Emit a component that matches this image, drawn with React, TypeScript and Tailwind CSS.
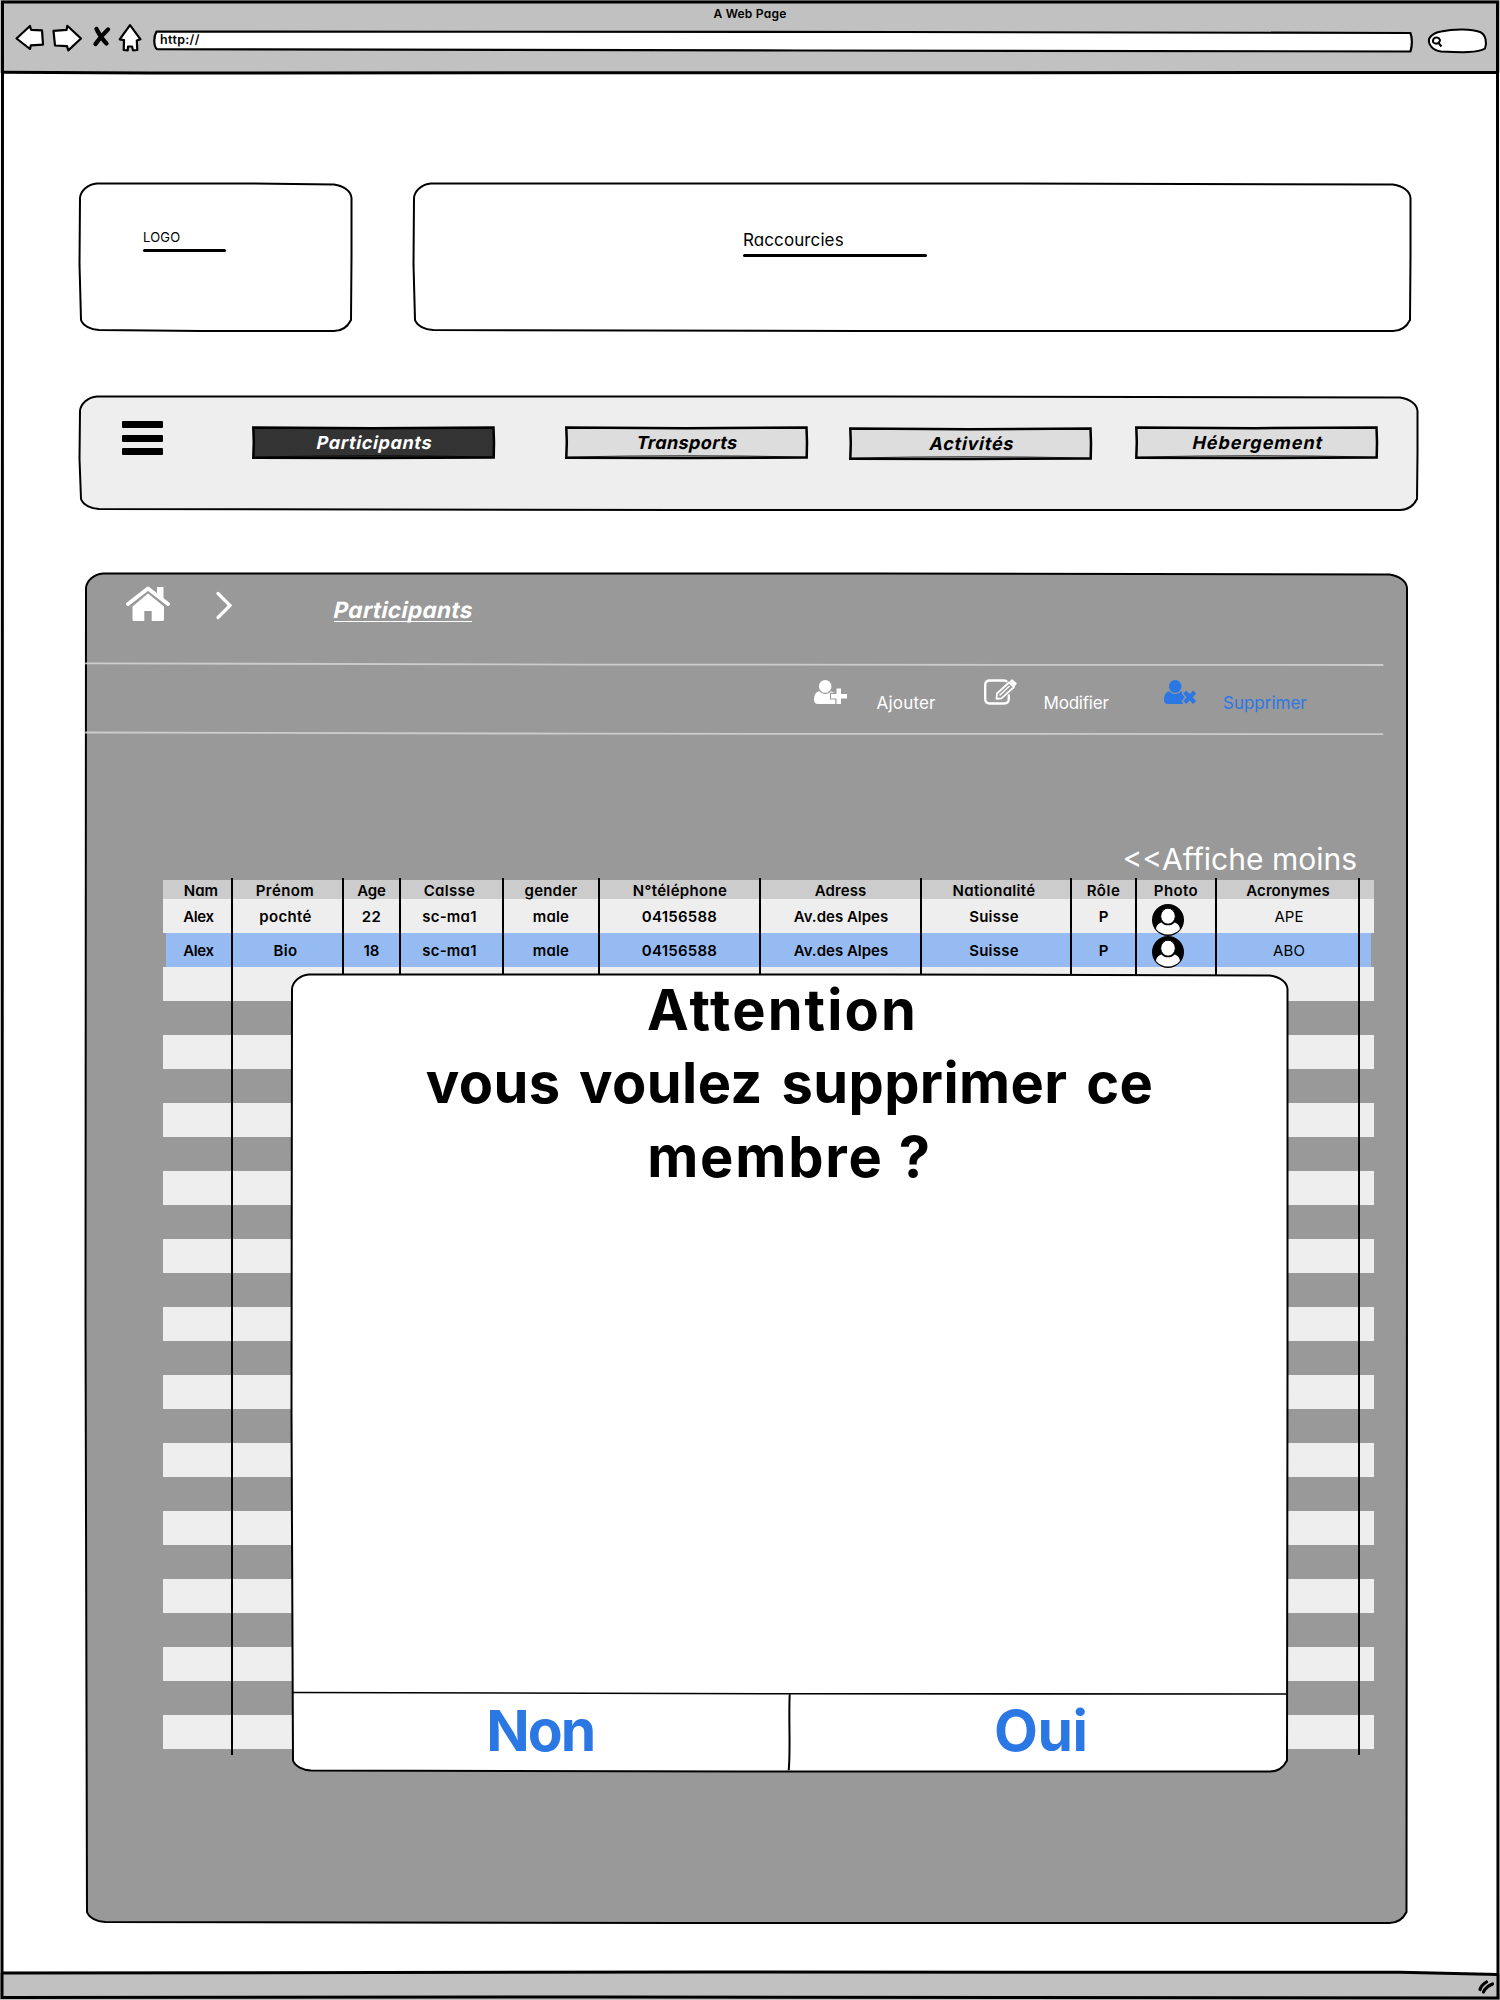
import type { ReactNode } from "react";

type FrameProps = { w: number; h: number; fill?: string; strokeWidth?: number };

/* Rounded outline with a slightly wavering, hand-drawn line. */
function SketchFrame({ w, h, fill = "#fff", strokeWidth = 2 }: FrameProps) {
  const d = [
    `M18 0.500 L${w * 0.6} 0.400 L${w - 18} 1.500`,
    `C${w - 8} 3 ${w - 1} 8 ${w - 0.5} 15`,
    `L${w - 0.5} ${h * 0.5} L${w - 1} ${h - 11}`,
    `C${w - 4} ${h - 5} ${w - 10} ${h} ${w - 18} ${h}`,
    `L${w * 0.45} ${h} L20 ${h - 1}`,
    `C12 ${h - 1.5} 4 ${h - 5} 2 ${h - 11}`,
    `L0.5 ${h * 0.55} L1 15 C1.5 8 9 1 18 0.500 Z`,
  ].join(" ");
  return (
    <svg className="absolute inset-0 h-full w-full overflow-visible" viewBox={`0 0 ${w} ${h}`} aria-hidden>
      <path d={d} fill={fill} stroke="#000" strokeWidth={strokeWidth} strokeLinejoin="round" />
    </svg>
  );
}

function BrowserBar() {
  return (
    <header className="flex h-[73px] flex-col bg-[#c1c1c1]">
      <div className="flex h-[23px] justify-center pt-[7.500px]">
        <span className="text-[12px] leading-none font-semibold tracking-[0.250px]">A Web Page</span>
      </div>
      <div className="flex items-start pl-[15px]">
        <svg className="mt-[0.500px] h-[28px] w-[130px] overflow-visible" viewBox="15 23 130 28" fill="#fff" stroke="#000" strokeWidth="2.2" strokeLinejoin="round" strokeLinecap="round" aria-hidden>
          <path d="M16.5 37.5 L30 25 L31 28.8 L42 29.3 L43 43.7 L30.8 44.4 L30 48 Z" />
          <path d="M53.5 29.8 L66.6 28.8 L67.3 24.8 L81 37.5 L68.3 49.4 L67 45.2 L55 44.5 Z" />
          <path d="M96.500 28 C99 33 102 38 106.500 42.500 M108 28.500 C103 33 99 38 95.500 43" strokeWidth="4.300" fill="none" />
          <path d="M130 24.200 L140.500 38.300 L136.800 39.500 L137.300 49 L133 49.300 L132 45.500 L128 45.500 L127.700 49.500 L123.700 49 L124 39.200 L119.700 38.300 Z" />
        </svg>
        <div className="relative mt-[8px] ml-[9px] h-[21px] w-[1259px] pt-[3px] pl-[6px]">
          <svg className="absolute inset-0 h-full w-full overflow-visible" viewBox="154 31 1259 21" aria-hidden>
            <path d="M156.500 31.500 L900 32 L1410.500 33 C1412.500 39 1412 46 1410.500 51.500 L800 50.500 L157 49.200 C153.500 46 153.500 37 156.500 31.500 Z" fill="#fff" stroke="#000" strokeWidth="2.200" strokeLinejoin="round" />
          </svg>
          <span className="relative block w-fit text-[12.500px] leading-none font-semibold tracking-[0.350px]">http://</span>
        </div>
        <svg className="mt-[2px] ml-[14px] h-[26px] w-[62px] overflow-visible" viewBox="1427 25 62 26" fill="#fff" stroke="#000" strokeWidth="2" aria-hidden>
          <path d="M1441 31.500 C1455 28.500 1472 29 1480 32 C1486 35 1487 42 1485 48.500 C1478 53 1462 52.500 1441 51.500 C1432 50 1428 44 1429 39 C1431 35 1435 32.500 1441 31.500 Z" />
          <path d="M1433.500 39 C1435 36.500 1439 37 1440 40 C1440 43 1436.500 44.500 1434 43 C1432.500 42 1432.700 40.500 1433.500 39 Z M1438.500 43 L1441.500 46.500" />
        </svg>
      </div>
    </header>
  );
}

function NavButton({ label, active, className }: { label: string; active?: boolean; className: string }) {
  return (
    <button className={"relative flex h-[33px] w-[243px] justify-center pt-[8px] pl-[2px] " + className}>
      <svg className="absolute inset-0 h-full w-full overflow-visible" viewBox="0 0 243 33" aria-hidden>
        <path d="M1.300 1.500 L120 2.200 L241.500 1.500 L242 16 L241.700 31.500 L120 32 L1.300 31.700 L1.800 16 Z" fill={active ? "#333" : "#ddd"} stroke="#000" strokeWidth="2.500" />
        <path d="M2 31 Q120 28.500 241 31" fill="none" stroke="#000" strokeWidth="0.800" />
      </svg>
      <span className={"relative -skew-x-12 text-[18px] leading-none font-bold " + (active ? "text-white" : "text-black")}>{label}</span>
    </button>
  );
}

function AddUserIcon() {
  return (
    <svg className="h-[24px] w-[33px]" viewBox="0 0 33 24" fill="currentColor" aria-hidden>
      <ellipse cx="11.200" cy="6.400" rx="6.200" ry="6.400" />
      <path d="M5.500 11.300 C7 13 9 14 11.200 14 C13.400 14 15.400 13 17 11.300 C18 11.400 19 12 19.800 13 H21.300 V12.800 H16 V19.500 H21.300 V24 H4 C1.500 24 0 22.500 0 20 C0 16 1.500 11.500 5.500 11.300 Z" />
      <path d="M22.500 8.500 H27 V14 H33 V18.500 H27 V24 H22.500 V18.500 H17 V14 H22.500 Z" />
    </svg>
  );
}

function EditIcon() {
  return (
    <svg className="h-[26px] w-[33px]" viewBox="0 0 33 26" fill="none" stroke="currentColor" aria-hidden>
      <path d="M22.500 2.200 C21.500 1.600 20.500 1.500 19.500 1.500 H6 C3 1.500 1.200 3.300 1.200 6 V20 C1.200 23 3 24.500 6 24.500 H20 C23 24.500 24.800 23 24.800 20 V16.500" strokeWidth="2.400" strokeLinecap="round" />
      <path d="M12.500 19.800 L13 14.500 L25 3.500 L30 8 L17.500 19.300 Z" strokeWidth="1.800" strokeLinejoin="round" />
      <path d="M15.500 16.500 L25.500 7" strokeWidth="1.500" />
      <path d="M26.500 2.500 L28 1 L32 4.500 L30.500 6.500 Z" fill="currentColor" strokeWidth="1.500" strokeLinejoin="round" />
    </svg>
  );
}

function RemoveUserIcon() {
  return (
    <svg className="h-[24px] w-[33px]" viewBox="0 0 33 24" fill="currentColor" aria-hidden>
      <ellipse cx="11.200" cy="6.400" rx="6.200" ry="6.400" />
      <path d="M5.500 11.300 C7 13 9 14 11.200 14 C13.400 14 15.400 13 17 11.300 C17.600 11.300 18.200 11.600 18.700 12 L17.500 13.300 L20.800 17.300 L17.500 21.200 L19.500 24 H4 C1.500 24 0 22.500 0 20 C0 16 1.500 11.500 5.500 11.300 Z" />
      <path d="M20.700 12 L30.700 22.500 M30.700 12 L20.700 22.500" stroke="currentColor" strokeWidth="4.300" />
    </svg>
  );
}

function Avatar() {
  return (
    <svg className="relative h-[32px] w-[32px] shrink-0" viewBox="0 0 32 32" aria-hidden>
      <circle cx="16" cy="16" r="16" fill="#000" />
      <path d="M9.500 18.500 C11 20.500 13.500 21.300 16 21.300 C18.500 21.300 21 20.500 22.500 18.500 C25.500 19.200 27.800 22 28 25 C25 28.600 20.700 30.500 16 30.500 C11.300 30.500 7 28.600 4 25 C4.200 22 6.500 19.200 9.500 18.500 Z" fill="#fff" />
      <ellipse cx="16" cy="12.200" rx="7.300" ry="8" fill="#fff" stroke="#000" strokeWidth="1" />
    </svg>
  );
}

const GRID = "grid grid-cols-[69px_111px_57px_103px_96px_161px_161px_150px_65px_80px_143px_15px]";

/* [text, padding that offsets it in its column, letter spacing] */
type Cell = [string, string, string];

const HEADS: Cell[] = [
  ["Nam", "pl-[7px]", "tracking-normal"],
  ["Prénom", "pr-[5px]", "tracking-[0.400px]"],
  ["Age", "", "tracking-[-0.100px]"],
  ["Calsse", "pr-[4px]", "tracking-[0.300px]"],
  ["gender", "", "tracking-[0.200px]"],
  ["N°téléphone", "pl-px", "tracking-[0.350px]"],
  ["Adress", "", "tracking-[0.100px]"],
  ["Nationalité", "pr-[4px]", "tracking-[0.300px]"],
  ["Rôle", "", "tracking-[0.500px]"],
  ["Photo", "", "tracking-[0.400px]"],
  ["Acronymes", "pl-px", "tracking-[0.100px]"],
];

const sharedCells: Cell[] = [
  ["sc-ma1", "pr-[4px]", "tracking-[0.200px]"],
  ["male", "", "tracking-[0.150px]"],
  ["04156588", "", "tracking-[0.250px]"],
  ["Av.des Alpes", "pl-px", "tracking-normal"],
  ["Suisse", "pr-[4px]", "tracking-[0.250px]"],
  ["P", "", "tracking-normal"],
];

const MEMBERS: Cell[][] = [
  [["Alex", "pl-[2px]", "tracking-[-0.300px]"], ["pochté", "pr-[4px]", "tracking-[0.350px]"], ["22", "", "tracking-[0.300px]"], ...sharedCells],
  [["Alex", "pl-[2px]", "tracking-[-0.300px]"], ["Bio", "pr-[4px]", "tracking-[0.400px]"], ["18", "", "tracking-normal"], ...sharedCells],
];

function MemberRow({ cells, acronym, children }: { cells: Cell[]; acronym: string; children?: ReactNode }) {
  return (
    <div className={GRID + " relative h-[34px]"}>
      {cells.map(([text, pad, tracking], i) => (
        <div key={i} className={"flex justify-center pt-[9.500px] " + pad}>
          <span className={"text-[15px] leading-none font-semibold whitespace-nowrap " + tracking}>{text}</span>
        </div>
      ))}
      <div className="pl-[16px]">{children}</div>
      <div className="flex justify-center pt-[9.500px] pl-[3px]">
        <span className="text-[15px] leading-none tracking-[0.100px]">{acronym}</span>
      </div>
    </div>
  );
}

function MembersTable() {
  return (
    <div className="relative ml-[78px] w-[1211px]">
      <div className={GRID + " h-[19px] bg-[#ccc]"}>
        {HEADS.map(([text, pad, tracking]) => (
          <div key={text} className={"flex justify-center pt-[3px] " + pad}>
            <span className={"text-[15px] leading-none font-semibold whitespace-nowrap " + tracking}>{text}</span>
          </div>
        ))}
      </div>
      <div className="bg-[#eee]">
        <MemberRow cells={MEMBERS[0]} acronym="APE">
          <div className="pt-[5px]"><Avatar /></div>
        </MemberRow>
      </div>
      <div className="bg-[linear-gradient(#95bbf2,#95bbf2)] bg-[length:1205px_100%] bg-center bg-no-repeat">
        <MemberRow cells={MEMBERS[1]} acronym="ABO">
          <div className="pt-[3px]"><Avatar /></div>
        </MemberRow>
      </div>
      {Array.from({ length: 23 }, (_, i) => (
        <div key={i} className={i % 2 === 0 ? "h-[34px] bg-[#eee]" : "h-[34px]"} />
      ))}
      <div className={GRID + " pointer-events-none absolute -top-[2px] -bottom-[6px] left-px w-full"}>
        {HEADS.map(([text]) => (
          <div key={text} className="border-r-2 border-black" />
        ))}
      </div>
    </div>
  );
}

function ConfirmDialog() {
  return (
    <div role="dialog" className="absolute top-[400.500px] left-[206px] flex h-[797.500px] w-[997px] flex-col">
      <SketchFrame w={997} h={797.5} />
      <svg className="absolute inset-0 h-full w-full overflow-visible" viewBox="0 0 997 797" fill="none" stroke="#000" aria-hidden>
        <path d="M1 718.300 L300 719 L500 719.500 L996 719.800" strokeWidth="1.600" />
        <path d="M498.700 720 C497.500 745 499.700 775 497.700 796" strokeWidth="2" />
      </svg>
      <div className="relative flex h-[719px] flex-col items-center text-[56px] leading-[73.500px] font-bold">
        <span className="-ml-[14px] tracking-[2.100px]">Attention</span>
        <span className="tracking-[0.400px] [word-spacing:5px]">vous voulez supprimer ce</span>
        <span className="tracking-[1.800px]">membre ?</span>
      </div>
      <div className="relative grid grid-cols-2 text-[57px] leading-none font-bold text-[#2b78e4]">
        <button className="flex justify-center pt-[9px]"><span className="tracking-[-2px]">Non</span></button>
        <button className="flex justify-center pt-[9px] pl-[4px]"><span className="tracking-[-0.500px]">Oui</span></button>
      </div>
    </div>
  );
}

export default function App() {
  return (
    <div className="relative flex h-[2000px] w-[1500px] flex-col overflow-hidden bg-white font-['Inter',sans-serif] text-black [font-feature-settings:'cv11']">
      <BrowserBar />
      <main className="flex flex-1 flex-col">
        <section className="flex pt-[110px] pl-[79px]">
          <div className="relative h-[148px] w-[273px] pt-[48px] pl-[64px]">
            <SketchFrame w={273} h={148} />
            <span className="relative block w-fit text-[13px] leading-none tracking-[0.200px]">LOGO</span>
            <div className="relative mt-[5px] h-[2.500px] w-[83px] rounded-full bg-black" />
          </div>
          <div className="relative ml-[61px] h-[148px] w-[998px] pt-[48.500px] pl-[330px]">
            <SketchFrame w={998} h={148} />
            <span className="relative block w-fit text-[17px] leading-none tracking-[0.100px]">Raccourcies</span>
            <div className="relative mt-[5.500px] h-[2.500px] w-[184px] rounded-full bg-black" />
          </div>
        </section>
        <nav className="relative mt-[65px] ml-[79px] flex h-[114px] w-[1339px] pt-[25px] pl-[42.500px]">
          <SketchFrame w={1339} h={114} fill="#eee" />
          <div className="relative flex h-[34px] w-[41px] flex-col justify-between">
            <i className="h-[7px] rounded-[1px] bg-black" />
            <i className="h-[7px] rounded-[1px] bg-black" />
            <i className="h-[7px] rounded-[1px] bg-black" />
          </div>
          <NavButton label="Participants" active className="mt-[5px] ml-[89px] tracking-[0.650px]" />
          <NavButton label="Transports" className="mt-[5px] ml-[70px] tracking-[0.400px]" />
          <NavButton label="Activités" className="mt-[6px] ml-[41px] tracking-[0.750px]" />
          <NavButton label="Hébergement" className="mt-[5px] ml-[43px] tracking-[0.950px]" />
        </nav>
        <section className="relative mt-[63px] ml-[85px] h-[1350px] w-[1322.500px]">
          <SketchFrame w={1322.5} h={1350} fill="#999" />
          <svg className="absolute top-0 left-0 h-[170px] w-full overflow-visible" viewBox="0 0 1322 170" fill="none" stroke="#ccc" strokeWidth="1.800" aria-hidden>
            <path d="M0 90.300 L500 91.600 L1298 92" />
            <path d="M0 159.500 L500 160.700 L1298 161.200" />
          </svg>
          <div className="relative flex h-[91px] pl-[41px] text-white">
            <svg className="mt-[13px] h-[36px] w-[44px]" viewBox="0 0 44 36" aria-hidden>
              <path d="M2 18 L22 2.500 L42 18" fill="none" stroke="#fff" strokeWidth="3.800" strokeLinecap="round" strokeLinejoin="round" />
              <path d="M31 1 H37.500 V13.500 L31 8.500 Z M22 7.500 L38 20.500 V33.500 Q38 35 36.500 35 H25.700 V25 H18.300 V35 H8 Q6.500 35 6.500 33.500 V20.500 Z" fill="#fff" />
            </svg>
            <svg className="mt-[18px] ml-[45px] h-[29px] w-[18px]" viewBox="0 0 18 29" aria-hidden>
              <path d="M3 2.500 L15 14.500 L3 26.500" fill="none" stroke="#fff" strokeWidth="3.200" strokeLinecap="round" />
            </svg>
            <div className="mt-[26px] ml-[101px] h-[22.500px] w-[138px] border-b border-white">
              <span className="block w-fit -skew-x-12 text-[22.500px] leading-none font-bold tracking-[0.350px]">Participants</span>
            </div>
          </div>
          <div className="relative grid h-[69px] grid-cols-[170px_180px_auto] pl-[728.500px] text-[17px] leading-none text-white">
            <div className="flex"><div className="mt-[16px]"><AddUserIcon /></div><span className="mt-[31px] ml-[30px] tracking-[0.200px]">Ajouter</span></div>
            <div className="flex"><div className="mt-[14.500px]"><EditIcon /></div><span className="mt-[31px] ml-[27px] tracking-[-0.200px]">Modifier</span></div>
            <div className="flex text-[#2b78e4]"><div className="mt-[16px]"><RemoveUserIcon /></div><span className="mt-[31px] ml-[26.500px]">Supprimer</span></div>
          </div>
          <div className="relative flex h-[147px] justify-end pt-[110.500px] pr-[50.500px] text-white">
            <span className="text-[30px] leading-none">&lt;&lt;Affiche moins</span>
          </div>
          <MembersTable />
          <ConfirmDialog />
        </section>
      </main>
      <footer className="h-[27px] bg-[#c1c1c1]" />
      <svg className="pointer-events-none absolute inset-0 h-full w-full" viewBox="0 0 1500 2000" fill="none" stroke="#000" strokeWidth="3" aria-hidden>
        <path d="M2.500 2 H1497.500 L1498 1998 L600 1997 L2 1997.500 Z" />
        <path d="M2 72.300 L150 73 L1498 72.500" />
        <path d="M2 1973 L700 1972 L1400 1972.300 L1498 1974.500" />
        <path d="M1480 1989.500 C1481 1986 1484 1983.500 1486.500 1982 M1483.500 1992 C1485 1988 1489 1985.500 1492.500 1984" strokeWidth="3.200" strokeLinecap="round" />
      </svg>
    </div>
  );
}
